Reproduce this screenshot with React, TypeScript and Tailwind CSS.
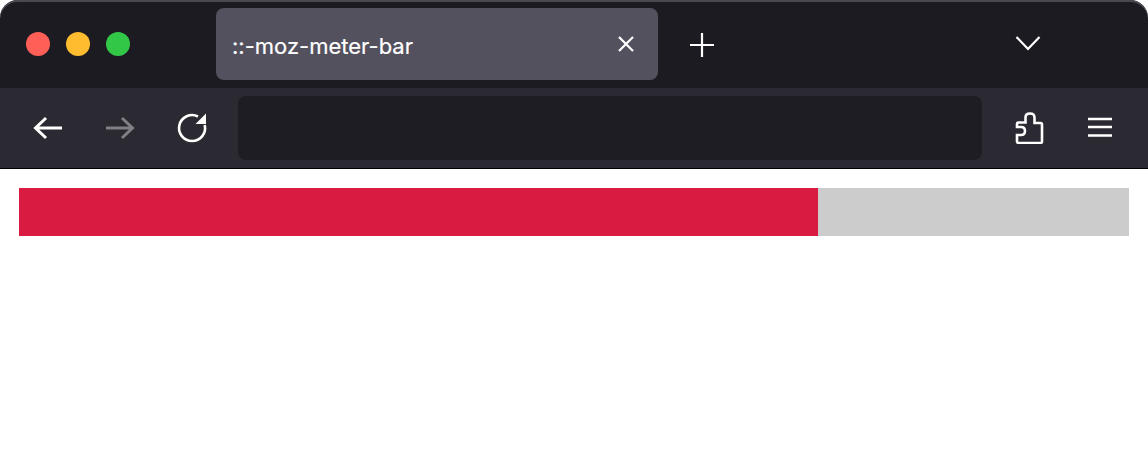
export default function App() {
  return (
    <div className="w-[1148px] h-[464px] bg-white overflow-hidden font-['Inter',sans-serif]">
      <div className="rounded-t-[18px] overflow-hidden bg-[#1c1b22] shadow-[inset_0_2px_0_#4a4950]">
        <div className="h-[88px] flex items-start pt-2">
          <div className="flex gap-4 pl-[26px] pt-6">
            <span className="w-6 h-6 rounded-full bg-[#ff5f57]" />
            <span className="w-6 h-6 rounded-full bg-[#febc2e]" />
            <span className="w-6 h-6 rounded-full bg-[#33c748]" />
          </div>
          <div className="ml-[86px] w-[442px] h-[72px] rounded-lg bg-[#53515e] flex items-center pl-4 pr-5">
            <span className="flex-1 text-white text-[22px] leading-none pt-1 [-webkit-text-stroke:0.2px_white]">::-moz-meter-bar</span>
            <svg width="24" height="24" viewBox="0 0 24 24" className="text-white">
              <path d="M5 5 L19 19 M19 5 L5 19" stroke="currentColor" strokeWidth="2.2" fill="none" />
            </svg>
          </div>
          <svg width="32" height="32" viewBox="0 0 32 32" className="ml-7 mt-[21px] text-white">
            <path d="M16 4 V28 M4 16 H28" stroke="currentColor" strokeWidth="2.2" fill="none" />
          </svg>
          <svg width="32" height="32" viewBox="0 0 32 32" className="ml-[294px] mt-[19px] text-white">
            <path d="M4.5 10 L16 22 L27.5 10" stroke="currentColor" strokeWidth="2.2" fill="none" />
          </svg>
        </div>
        <div className="h-[81px] bg-[#2b2a33] border-b border-black flex items-start pt-2">
          <div className="flex pl-8 gap-10 pt-4">
            <svg width="32" height="32" viewBox="0 0 32 32" className="text-white">
              <path d="M30 16 H4 M14 6 L3.5 16 L14 26" stroke="currentColor" strokeWidth="3" fill="none" />
            </svg>
            <svg width="32" height="32" viewBox="0 0 32 32" className="text-white/40">
              <path d="M2 16 H28 M18 6 L28.5 16 L18 26" stroke="currentColor" strokeWidth="3" fill="none" />
            </svg>
            <svg width="32" height="32" viewBox="0 0 32 32" className="text-white">
              <path d="M28.7 13 A13 13 0 1 1 22 4.5" stroke="currentColor" strokeWidth="2.6" fill="none" />
              <path d="M30 1.5 V12 H19.5 Z" fill="currentColor" />
            </svg>
          </div>
          <div className="ml-[30px] w-[744px] h-16 rounded-lg bg-[#1e1d23]" />
          <svg width="32" height="32" viewBox="0 0 32 32" className="ml-[31px] mt-4 text-white">
            <path d="M6 31 H27.5 Q29 31 29 29.5 V12.5 Q29 11 27.5 11 H21.5 V5.5 Q21.5 1.5 17 1.5 Q12.5 1.5 12.5 5.5 V10.5 H5.5 Q4 10.5 4 12 V15 H8 Q12 15 12 19 Q12 23 8 23 H4 V29.5 Q4 31 6 31 Z" stroke="currentColor" strokeWidth="2.6" fill="none" />
          </svg>
          <svg width="32" height="32" viewBox="0 0 32 32" className="ml-[39px] mt-4 text-white">
            <path d="M4 7 H28 M4 15 H28 M4 23.5 H28" stroke="currentColor" strokeWidth="2.4" fill="none" />
          </svg>
        </div>
      </div>
      <div className="pt-[19px] pl-[19px]">
        <div className="w-[1110px] h-12 bg-[#cccccc]">
          <div className="w-[799px] h-12 bg-[#da1b41]" />
        </div>
      </div>
    </div>
  );
}
